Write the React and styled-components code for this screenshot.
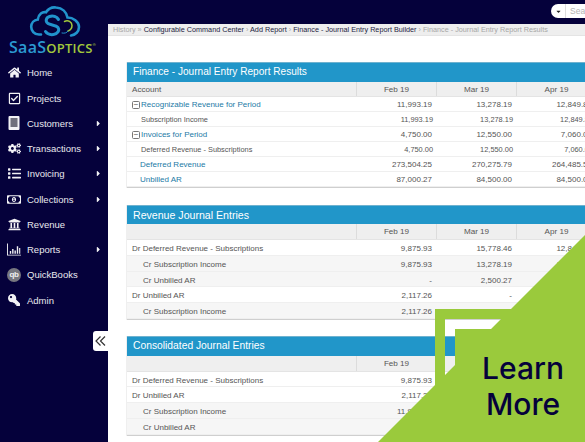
import React from "react";
import styled, { createGlobalStyle } from "styled-components";
import {
  FaHome,
  FaRegCheckSquare,
  FaCogs,
  FaList,
  FaRegMoneyBillAlt,
  FaUniversity,
  FaKey,
  FaCaretRight,
  FaCaretDown,
} from "react-icons/fa";

const NAVY = "#05013b";

const GlobalStyle = createGlobalStyle`
  html, body { margin: 0; padding: 0; background: ${NAVY}; }
  body { font-family: "Liberation Sans", Arial, sans-serif; }
`;

const Page = styled.div`
  position: relative;
  display: grid;
  grid-template-columns: 108px 1fr;
  width: 585px;
  height: 442px;
  overflow: hidden;
  background: ${NAVY};
`;

const Sidebar = styled.aside`
  display: flex;
  flex-direction: column;
`;

const LogoBlock = styled.div`
  position: relative;
  height: 60.3px;
`;

const LogoMark = styled.svg`
  display: block;
  width: 108px;
  height: 40px;
`;

const LogoText = styled.div`
  position: absolute;
  left: 9px;
  top: 37px;
  font-family: "Open Sans", sans-serif;
  font-size: 16px;
  font-weight: 600;
  line-height: 20px;
  letter-spacing: 0.3px;
  white-space: nowrap;
  color: #2b9ad2;
`;

const LogoGreen = styled.span`
  color: #a2c83c;
  font-size: 13px;
  letter-spacing: 0.2px;
`;

const LogoMarkReg = styled.sup`
  color: #a2c83c;
  font-size: 4px;
  vertical-align: 7px;
  line-height: 0;
  letter-spacing: 0;
`;

const NavList = styled.nav`
  display: flex;
  flex-direction: column;
`;

const NavItem = styled.div`
  display: flex;
  align-items: center;
  height: 25.25px;
  padding: 0 5px 0 7px;
  color: #e9e9ef;
  font-size: 9.5px;
  white-space: nowrap;
`;

const NavIcon = styled.span`
  display: flex;
  align-items: center;
  justify-content: center;
  width: 14px;
  margin-right: 6px;
  font-size: 13px;
  color: #f2f2f5;
`;

const NavLabel = styled.span`
  flex: 1;
`;

const NavCaret = styled(FaCaretRight)`
  font-size: 9px;
  color: #f2f2f5;
`;

const QbBadge = styled.span`
  display: flex;
  align-items: center;
  justify-content: center;
  width: 14px;
  height: 14px;
  border-radius: 50%;
  background: #77777f;
  color: #f1f1f1;
  font-size: 8px;
  font-weight: bold;
  letter-spacing: -0.5px;
`;

const CollapseTab = styled.div`
  position: absolute;
  left: 93px;
  top: 331px;
  display: flex;
  align-items: center;
  justify-content: center;
  width: 15px;
  height: 20px;
  background: #fff;
  border-radius: 3px 0 0 3px;
`;

const Main = styled.main`
  display: flex;
  flex-direction: column;
  min-width: 0;
`;

const TopBar = styled.div`
  display: flex;
  justify-content: flex-end;
  align-items: flex-start;
  height: 24px;
  padding-top: 4px;
  box-sizing: border-box;
`;

const SearchPill = styled.div`
  display: flex;
  align-items: center;
  width: 34px;
  height: 14px;
  background: #fff;
  border-radius: 7px 0 0 7px;
  overflow: hidden;
`;

const SearchDrop = styled.span`
  display: flex;
  flex-shrink: 0;
  align-items: center;
  justify-content: center;
  width: 14px;
  height: 14px;
  font-size: 7px;
  color: #222;
  border-right: 1px solid #ddd;
`;

const SearchHint = styled.span`
  margin-left: 4px;
  font-size: 8.5px;
  color: #b4b4b4;
`;

const Breadcrumb = styled.div`
  height: 11px;
  padding-left: 5px;
  background: #eeeeee;
  border-bottom: 1px solid #e4e4e4;
  font-size: 7.25px;
  line-height: 11px;
  white-space: nowrap;
  color: #a6a6a6;
  box-sizing: content-box;
`;

const Crumb = styled.span`
  color: #23233f;
`;

const Content = styled.div`
  flex: 1;
  min-height: 0;
  padding: 26px 0 0 19px;
  background: #fff;
`;

const Panel = styled.section`
  width: 520px;
  margin-bottom: 16.4px;
  border-bottom: 1px solid #cfcfcf;
  box-shadow: -1px 0 0 #efefef;
`;

const PanelTitle = styled.h2`
  margin: 0;
  height: 18.6px;
  padding-left: 6px;
  background: #2196c9;
  border-top: 1px solid #6fb2cf;
  color: #fff;
  font-size: ${(p) => p.$size}px;
  font-weight: normal;
  line-height: 18px;
`;

const Row = styled.div`
  display: grid;
  grid-template-columns: 230px 80px 80px 80px 50px;
  height: ${(p) => p.$h}px;
  padding-top: ${(p) => p.$nudge * 2}px;
  background: ${(p) => (p.$shaded ? "#f6f6f6" : "#fff")};
  border-bottom: 1px solid #efefef;
  box-sizing: border-box;
  line-height: ${(p) => p.$h - 1 - p.$nudge * 2}px;
  color: #555;
`;

const HeadRow = styled(Row)`
  padding-top: 0;
  line-height: normal;
  background: #efefef;
  border-bottom: 1px solid #e4e4e4;
`;

const HeadCell = styled.div`
  padding-top: ${(p) => p.$nudge * 2}px;
  text-align: center;
  border-right: 1px solid #dcdcdc;
  font-size: 8.1px;
  line-height: ${(p) => 14.8 - p.$nudge * 2}px;
  &:first-child {
    text-align: left;
    padding-left: 5px;
  }
`;

const NameCell = styled.div`
  display: flex;
  align-items: center;
  white-space: nowrap;
  padding-left: ${(p) => p.$indent}px;
  color: ${(p) => (p.$link ? "#1c7aa6" : "#555")};
  font-size: ${(p) => p.$size}px;
`;

const ValueCell = styled.div`
  text-align: right;
  padding-right: ${(p) => (p.$small ? 4 : 5)}px;
  font-size: ${(p) => p.$size}px;
  white-space: nowrap;
`;

const Toggle = styled.span`
  display: inline-flex;
  align-items: center;
  justify-content: center;
  flex-shrink: 0;
  width: 6px;
  height: 6px;
  margin-right: 1px;
  border: 1px solid #777;
  border-radius: 1.5px;
  color: #555;
  font-size: 8px;
  line-height: 6px;
  box-sizing: content-box;
`;

const Banner = styled.div`
  position: absolute;
  inset: 0;
  pointer-events: none;
`;

const BannerShape = styled.svg`
  display: block;
  width: 585px;
  height: 442px;
`;

const BannerText = styled.div`
  position: absolute;
  left: 463px;
  top: 350px;
  width: 120px;
  text-align: center;
  font-family: Inter, sans-serif;
  font-size: 30px;
  font-weight: 500;
  line-height: 36px;
  color: ${NAVY};
`;

const NAV = [
  { label: "Home", icon: <FaHome /> },
  { label: "Projects", icon: <FaRegCheckSquare /> },
  {
    label: "Customers",
    more: true,
    icon: (
      <svg width="12" height="14" viewBox="0 0 12 14">
        <rect x="0.5" width="11" height="14" rx="1" fill="#f2f2f5" />
        <rect x="2.5" y="2" width="7" height="9" fill="#6f6f7c" />
      </svg>
    ),
  },
  { label: "Transactions", more: true, icon: <FaCogs /> },
  { label: "Invoicing", more: true, icon: <FaList /> },
  { label: "Collections", more: true, icon: <FaRegMoneyBillAlt size={15} /> },
  { label: "Revenue", icon: <FaUniversity /> },
  {
    label: "Reports",
    more: true,
    icon: (
      <svg width="15" height="13" viewBox="0 0 15 13" fill="#f2f2f5">
        <path d="M0 0h1v12h14v1H0z" />
        <path d="M3 8h1.5v3H3zM5.5 6H7v5H5.500zM8 7.5h1.5V11H8zM10.5 3H12v8h-1.500zM13 5h1.200v6H13z" />
      </svg>
    ),
  },
  { label: "QuickBooks", icon: <QbBadge>qb</QbBadge> },
  { label: "Admin", icon: <FaKey size={12} style={{ transform: "scaleX(-1)" }} /> },
];

const RESULTS = [
  { name: "Recognizable Revenue for Period", tree: true, link: true, v: ["11,993.19", "13,278.19", "12,849.88"] },
  { name: "Subscription Income", child: true, v: ["11,993.19", "13,278.19", "12,849.88"] },
  { name: "Invoices for Period", tree: true, link: true, v: ["4,750.00", "12,550.00", "7,060.00"] },
  { name: "Deferred Revenue - Subscriptions", child: true, v: ["4,750.00", "12,550.00", "7,060.00"] },
  { name: "Deferred Revenue", link: true, v: ["273,504.25", "270,275.79", "264,485.50"] },
  { name: "Unbilled AR", link: true, v: ["87,000.27", "84,500.00", "84,500.00"] },
];

const REVENUE = [
  { name: "Dr Deferred Revenue - Subscriptions", v: ["9,875.93", "15,778.46", "12,849.88"] },
  { name: "Cr Subscription Income", cr: true, v: ["9,875.93", "13,278.19", "12,849.88"] },
  { name: "Cr Unbilled AR", cr: true, v: ["-", "2,500.27", "-"] },
  { name: "Dr Unbilled AR", v: ["2,117.26", "-", "-"] },
  { name: "Cr Subscription Income", cr: true, v: ["2,117.26", "-", "-"] },
];

const CONSOLIDATED = [
  { name: "Dr Deferred Revenue - Subscriptions", v: ["9,875.93", "15,778.46", "12,849.88"] },
  { name: "Dr Unbilled AR", v: ["2,117.26", "-", "-"] },
  { name: "Cr Subscription Income", cr: true, v: ["11,993.19", "13,278.19", "12,849.88"] },
  { name: "Cr Unbilled AR", cr: true, v: ["-", "2,500.27", "-"] },
];

function Logo() {
  return (
    <LogoBlock>
      <LogoMark viewBox="0 0 108 40">
        <g fill="none" stroke="#2193cc" strokeLinecap="round">
          <path
            d="M41 34.500H39C34 34.500 31.200 30.500 31.200 26.800C31.200 22.800 34 20 37.800 19.500C38.500 14 42.500 11.500 46 12.300C48.500 8.500 52.500 7 56 7.500C62.500 8 66.500 12.500 67.500 17.500C73 17.500 79 21.500 79 27C79 31.500 75.500 35 71 35.500"
            strokeWidth="2.6"
          />
          <path
            d="M58.500 19.500C57 16.500 53 15.500 49.500 16.500C46 17.500 45 21.500 48 23.500C50.500 25.200 56 25 58 27.500C60 30.500 57.500 34 53.500 34.500C50 35 47 33.800 45.500 31.500"
            strokeWidth="3"
          />
        </g>
        <path
          d="M64.500 21.500C68 19.500 72 22 72 25.500C72 28 70.500 30 68 31"
          fill="none"
          stroke="#a2c83c"
          strokeWidth="1.500"
          strokeLinecap="round"
        />
        <path
          d="M62 33C64.500 33.500 67 33 68 31"
          fill="none"
          stroke="#2193cc"
          strokeWidth="1"
          strokeLinecap="round"
        />
      </LogoMark>
      <LogoText>
        SaaS<LogoGreen>OPTICS</LogoGreen>
        <LogoMarkReg>®</LogoMarkReg>
      </LogoText>
    </LogoBlock>
  );
}

function DataRow({ row, h, small, nudge }) {
  const isChild = small && row.child;
  const size = !small ? 8 : isChild ? 7.4 : 8;
  return (
    <Row $h={h} $nudge={nudge} $shaded={row.cr}>
      <NameCell
        $indent={row.cr ? 16 : row.tree ? 5 : row.child ? 14 : small ? 13 : 5}
        $link={row.link}
        $size={size}
      >
        {row.tree && <Toggle>−</Toggle>}
        {row.name}
      </NameCell>
      {row.v.map((val, i) => (
        <ValueCell key={i} $small={isChild} $size={size}>
          {val}
        </ValueCell>
      ))}
    </Row>
  );
}

function ReportPanel({ title, titleSize, account, rows, rowH, small, nudge, headNudge }) {
  return (
    <Panel>
      <PanelTitle $size={titleSize}>{title}</PanelTitle>
      <HeadRow $h={15.8} $nudge={0}>
        <HeadCell $nudge={headNudge}>{account}</HeadCell>
        <HeadCell $nudge={headNudge}>Feb 19</HeadCell>
        <HeadCell $nudge={headNudge}>Mar 19</HeadCell>
        <HeadCell $nudge={headNudge}>Apr 19</HeadCell>
      </HeadRow>
      {rows.map((row, i) => (
        <DataRow key={i} row={row} h={rowH} small={small} nudge={nudge} />
      ))}
    </Panel>
  );
}

export default function App() {
  return (
    <Page>
      <GlobalStyle />
      <Sidebar>
        <Logo />
        <NavList>
          {NAV.map((item) => (
            <NavItem key={item.label}>
              <NavIcon>{item.icon}</NavIcon>
              <NavLabel>{item.label}</NavLabel>
              {item.more && <NavCaret />}
            </NavItem>
          ))}
        </NavList>
      </Sidebar>
      <Main>
        <TopBar>
          <SearchPill>
            <SearchDrop>
              <FaCaretDown />
            </SearchDrop>
            <SearchHint>Search</SearchHint>
          </SearchPill>
        </TopBar>
        <Breadcrumb>
          History » <Crumb>Configurable Command Center</Crumb> ›{" "}
          <Crumb>Add Report</Crumb> › <Crumb>Finance - Journal Entry Report Builder</Crumb> ›{" "}
          Finance - Journal Entry Report Results
        </Breadcrumb>
        <Content>
          <ReportPanel
            title="Finance - Journal Entry Report Results"
            titleSize={10.1}
            account="Account"
            rows={RESULTS}
            rowH={15}
            small
            nudge={1}
            headNudge={0.5}
          />
          <ReportPanel
            title="Revenue Journal Entries"
            titleSize={10.6}
            rows={REVENUE}
            rowH={15.75}
            nudge={2}
            headNudge={1}
          />
          <ReportPanel
            title="Consolidated Journal Entries"
            titleSize={10.3}
            rows={CONSOLIDATED}
            rowH={15.75}
            nudge={2}
            headNudge={1}
          />
        </Content>
      </Main>
      <CollapseTab>
        <svg width="11" height="10" viewBox="0 0 11 10" fill="none" stroke="#333" strokeWidth="1.200">
          <path d="M5.500 0.500L1 5L5.500 9.500M10 0.500L5.500 5L10 9.500" />
        </svg>
      </CollapseTab>
      <Banner>
        <BannerShape viewBox="0 0 585 442">
          <path
            fillRule="evenodd"
            fill="#9aca3c"
            d="M585 235L511 309H435V385L378 442H585ZM445 319H501L491 329H455V365L445 375Z"
          />
        </BannerShape>
        <BannerText>
          Learn
          <br />
          More
        </BannerText>
      </Banner>
    </Page>
  );
}
